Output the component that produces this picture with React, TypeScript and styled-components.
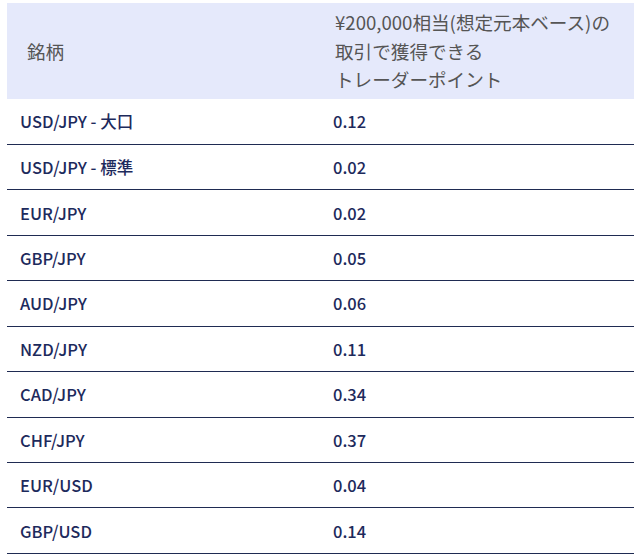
import styled, { createGlobalStyle } from "styled-components"

const GlobalStyle = createGlobalStyle`
  body {
    margin: 0;
    background: #ffffff;
    font-family: "Noto Sans CJK JP", "Noto Sans", sans-serif;
  }
`

const rows = [
  { pair: "USD/JPY - 大口", point: "0.12" },
  { pair: "USD/JPY - 標準", point: "0.02" },
  { pair: "EUR/JPY", point: "0.02" },
  { pair: "GBP/JPY", point: "0.05" },
  { pair: "AUD/JPY", point: "0.06" },
  { pair: "NZD/JPY", point: "0.11" },
  { pair: "CAD/JPY", point: "0.34" },
  { pair: "CHF/JPY", point: "0.37" },
  { pair: "EUR/USD", point: "0.04" },
  { pair: "GBP/USD", point: "0.14" },
]

const App = () => {
  return (
    <Page>
      <GlobalStyle />
      <Table>
        <thead>
          <tr>
            <HeadCell first>銘柄</HeadCell>
            <HeadCell>
              ¥200,000相当(想定元本ベース)の
              <br />
              取引で獲得できる
              <br />
              トレーダーポイント
            </HeadCell>
          </tr>
        </thead>
        <tbody>
          {rows.map((row) => (
            <Row key={row.pair}>
              <Cell>{row.pair}</Cell>
              <Cell>{row.point}</Cell>
            </Row>
          ))}
        </tbody>
      </Table>
    </Page>
  )
}

const Page = styled.div`
  padding: 3px 6px 0 7px;
`

const Table = styled.table`
  width: 627px;
  border-collapse: collapse;
  table-layout: fixed;
`

const HeadCell = styled.th<{ first?: boolean }>`
  width: ${(p) => (p.first ? "313px" : "auto")};
  height: 96px;
  box-sizing: border-box;
  padding: 0 0 0 ${(p) => (p.first ? "20px" : "15px")};
  background: #e5e9fb;
  color: #555555;
  font-size: 18.6px;
  font-weight: 400;
  line-height: 28.5px;
  text-align: left;
  vertical-align: middle;
`

const Row = styled.tr`
  height: 45.44px;
  border-bottom: 1px solid #1f2b52;
`

const Cell = styled.td`
  padding: 0 0 0 13px;
  color: #1d2a5c;
  font-size: 16.5px;
  font-weight: 500;
  line-height: 24px;
  vertical-align: middle;
`

export default App
